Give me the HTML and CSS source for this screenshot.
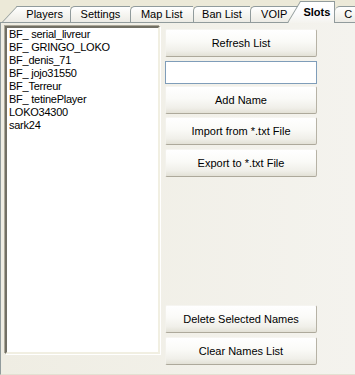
FILE: index.html
```html
<!DOCTYPE html>
<html>
<head>
<meta charset="utf-8">
<link rel="stylesheet" href="styles.css">
</head>
<body>
<div class="window">
  <div class="tabs">
    <div class="tab tab-first w-players">Players</div>
    <div class="tab w-settings">Settings</div>
    <div class="tab w-maplist">Map List</div>
    <div class="tab w-banlist">Ban List</div>
    <div class="tab w-voip">VOIP</div>
    <div class="tab tab-selected w-slots">Slots</div>
    <div class="tab tab-last w-c">C</div>
  </div>
  <div class="panel">
    <div class="listbox">
      <div class="item">BF_ serial_livreur</div>
      <div class="item">BF_ GRINGO_LOKO</div>
      <div class="item">BF_denis_71</div>
      <div class="item">BF_ jojo31550</div>
      <div class="item">BF_Terreur</div>
      <div class="item">BF_ tetinePlayer</div>
      <div class="item">LOKO34300</div>
      <div class="item">sark24</div>
    </div>
    <div class="column">
      <button class="btn btn-refresh">Refresh List</button>
      <input class="field" type="text">
      <button class="btn btn-add">Add Name</button>
      <button class="btn btn-import">Import from *.txt File</button>
      <button class="btn btn-export">Export to *.txt File</button>
      <button class="btn btn-delete">Delete Selected Names</button>
      <button class="btn btn-clear">Clear Names List</button>
    </div>
  </div>
</div>
</body>
</html>
```

FILE: styles.css
```css
html, body {
  margin: 0;
  padding: 0;
  background: #ECE9D8;
  overflow: hidden;
}

body {
  width: 355px;
  height: 375px;
  font-family: "Liberation Sans", Arial, sans-serif;
  font-size: 11px;
  color: #000;
}

.window {
  width: 355px;
  height: 375px;
  display: flex;
  flex-direction: column;
}

.tabs {
  height: 22px;
  display: flex;
  align-items: flex-end;
  padding-left: 17px;
  position: relative;
  z-index: 2;
}

.tab {
  position: relative;
  box-sizing: border-box;
  height: 16px;
  line-height: 15px;
  text-align: center;
  border-top: 1px solid #919B9C;
  border-left: 1px solid #919B9C;
  border-top-left-radius: 5px;
  background: linear-gradient(#FFFFFF, #F4F3EE 60%, #ECEBE5);
  white-space: nowrap;
}

.tab-first {
  border-left: none;
  border-top-left-radius: 0;
  z-index: 3;
}

.tab-first::before {
  content: "";
  position: absolute;
  left: -15px;
  top: -1px;
  bottom: 0;
  width: 22px;
  border-top: 1px solid #919B9C;
  border-left: 1px solid #919B9C;
  background: linear-gradient(#FFFFFF, #F4F3EE 60%, #ECEBE5);
  transform: skewX(-43deg);
  transform-origin: bottom left;
  z-index: -1;
}

.w-players { width: 54px; padding-left: 2px; }
.w-settings { width: 60px; }
.w-maplist { width: 64px; }
.w-banlist { width: 58px; }
.w-voip { width: 50px; text-align: left; padding-left: 10px; }
.w-c { width: 20px; text-align: left; padding-left: 9px; border-top-left-radius: 5px; }

.tab-selected {
  height: 22px;
  line-height: 21px;
  margin-bottom: -1px;
  font-weight: bold;
  border-left: none;
  border-top-left-radius: 0;
  border-right: 1px solid #919B9C;
  background: linear-gradient(#FFFFFF, #FCFCFE 50%, #F4F3EE);
  z-index: 4;
  width: 36px;
}

.tab-selected::before {
  content: "";
  position: absolute;
  left: -13px;
  top: -1px;
  bottom: 0;
  width: 20px;
  border-top: 1px solid #919B9C;
  border-left: 1px solid #919B9C;
  background: linear-gradient(#FFFFFF, #FCFCFE 50%, #F4F3EE);
  transform: skewX(-31deg);
  transform-origin: bottom left;
  z-index: -1;
}

.tab-last {
  border-left: none;
}

.panel {
  box-sizing: border-box;
  height: 353px;
  display: flex;
  align-items: stretch;
  padding: 3px 0 0 4px;
  border-top: 1px solid #919B9C;
  border-left: 1px solid #919B9C;
  border-bottom: 1px solid #E3E0D2;
  background: linear-gradient(to right, #EFEDE3, #F4F3EE);
}

.listbox {
  box-sizing: border-box;
  align-self: flex-start;
  width: 155px;
  height: 328px;
  background: #FFFFFF;
  border-style: solid;
  border-width: 2px;
  border-color: #716F64 #F1EFE2 #F1EFE2 #716F64;
  box-shadow: -1px -1px 0 #ACA899, 1px 1px 0 #FFFFFF;
  padding: 0 2px;
}

.item {
  height: 13px;
  line-height: 13px;
  white-space: nowrap;
  letter-spacing: -0.25px;
}

.column {
  width: 152px;
  margin-left: 5px;
  display: flex;
  flex-direction: column;
  padding-bottom: 9px;
}

.btn {
  box-sizing: border-box;
  height: 28px;
  width: 152px;
  margin: 0;
  padding: 0;
  font-family: "Liberation Sans", Arial, sans-serif;
  font-size: 11px;
  color: #000;
  border: 1px solid;
  border-color: #F6F5F1 #B6B2A5 #ADA99B #F3F2EC;
  border-radius: 2px;
  background: linear-gradient(#FFFFFF, #FAFAF7 45%, #F0EFE9 80%, #E3E1D6);
}

.field {
  box-sizing: border-box;
  height: 23px;
  width: 152px;
  margin: 4px 0 0 0;
  padding: 0 3px;
  border: 1px solid #7F9DB9;
  background: #FFFFFF;
  font-family: "Liberation Sans", Arial, sans-serif;
  font-size: 11px;
}

.btn-refresh { margin-top: 3px; }
.btn-add { margin-top: 2px; }
.btn-import { margin-top: 3px; }
.btn-export { margin-top: 4px; }
.btn-delete { margin-top: auto; }
.btn-clear { margin-top: 4px; }
```
